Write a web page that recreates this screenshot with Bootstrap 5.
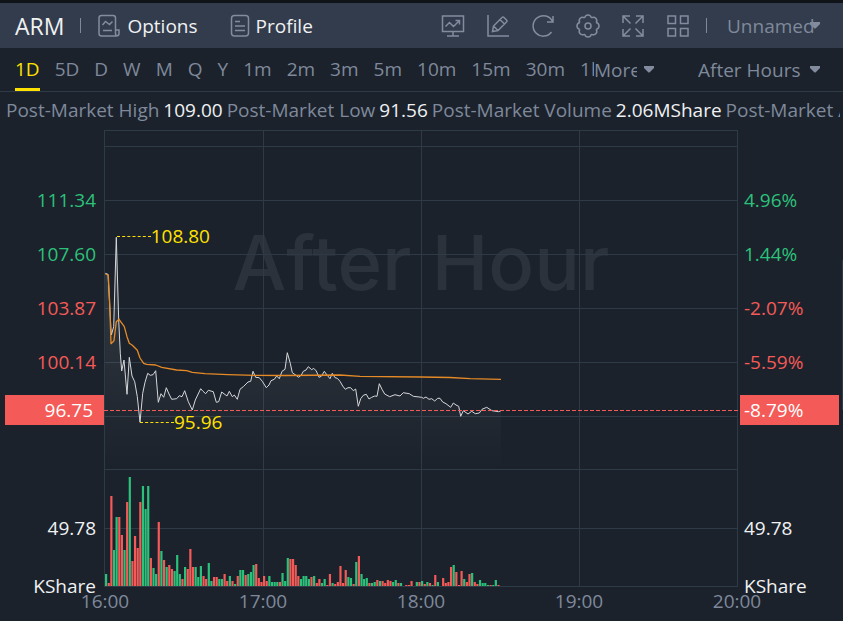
<!DOCTYPE html>
<html lang="en">
<head>
<meta charset="utf-8">
<meta name="viewport" content="width=device-width, initial-scale=1">
<title>ARM After Hours</title>
<link href="https://cdn.jsdelivr.net/npm/bootstrap@5.3.0/dist/css/bootstrap.min.css" rel="stylesheet">
<style>
:root{--bg:#1b222b;--bar:#323c4c;--line:#2f3a47;--muted:#7f899b;--up:#2cc17b;--down:#f45a57;--hot:#ffe100}
body{background:var(--bg);color:#f0f1f3;font-family:"Open Sans","Noto Sans",sans-serif;font-size:19px;line-height:30px;overflow-x:hidden}
.app{border-top:3px solid #101418}
.topbar{background:var(--bar);height:45px;padding:0 22px 0 15px}
.ticker{font-size:23px}
.divider{width:1px;height:15px;background:var(--muted)}
.view-link{color:#f0f1f3;gap:6px}
.view-link svg,.tool svg{fill:none;stroke:#828c9e;stroke-width:1.5;display:block}
.tools{gap:21px}
.tool{width:24px;height:24px;color:var(--muted)}
.picker{appearance:none;border:0;color:var(--muted);padding:0;height:30px;background:transparent url("data:image/svg+xml,%3Csvg xmlns='http://www.w3.org/2000/svg' width='12' height='7'%3E%3Cpath d='M1 0h10v2L6.500 6.500h-1L1 2z' fill='%23828c9e'/%3E%3C/svg%3E") no-repeat right center}
.pick-layout{width:94px;padding-right:6px}
.pick-more{width:61px;padding-right:18px;margin-right:43px}
.pick-session{width:123px;padding-right:18px}
.periods{height:44px;border-bottom:1px solid var(--line);padding:0 22px 0 15px}
.period-list{gap:15px;min-width:0;overflow:hidden;height:43px}
.period{color:var(--muted);border:0;background:none;padding:0;border-bottom:3px solid transparent;border-top:1px solid transparent;white-space:nowrap;flex:none}
.period.active{color:var(--hot);border-bottom-color:var(--hot)}
.stats{height:38px;padding:3px 0 0 6px;margin-right:3px;color:var(--muted);gap:4px}
.stats b{font-weight:400;color:#f0f1f3}
.axis-l{width:104px;padding-top:43px}
.axis-r{width:105px;padding-top:43px}
.axis-l .tick{padding-right:8px;text-align:right}
.axis-r .tick{padding-left:6px}
.tick{height:54px;line-height:54px}
.tag{background:var(--down);color:#fff;margin:6px 0 76px;height:30px}
.axis-l .tag{margin-left:5px;padding-right:11px;text-align:right}
.axis-r .tag{margin-left:2px;margin-right:4px;padding-left:4px}
.tick.unit{height:16px;line-height:30px;margin-top:16px}
.up{color:var(--up)}.down{color:var(--down)}
.plot{min-width:0}
.plot svg{display:block;width:100%;height:457px;position:relative}
.plot svg *{vector-effect:non-scaling-stroke}
.watermark{left:0;right:0;top:86px;text-align:center;font:500 76px/92px Inter,Roboto,sans-serif;color:#2b323c;white-space:nowrap}
.callout{color:var(--hot)}
.callout::before{content:"";width:34px;border-top:1px dashed var(--hot)}
.peak{left:2%;top:91px}
.trough{left:36px;top:277px}
.hours{color:var(--muted);margin:0 79px 0 78px;line-height:29px}
.hours span{width:54px;text-align:center;white-space:nowrap}
.edge{right:0;top:257px;width:1px;height:150px;background:var(--line)}
</style>
</head>
<body>
<main class="app position-relative">
  <header class="topbar d-flex align-items-center">
    <span class="ticker">ARM</span>
    <span class="divider mx-3"></span>
    <a href="#options" class="view-link d-flex align-items-center text-decoration-none">
      <svg width="24" height="24" viewBox="0 0 24 24"><path d="M18.500 16V4q0-2.500-2.500-2.500H4.500Q2 1.500 2 4v15.500Q2 22 4.500 22H19q3 0 3-2.500V16h-3.500v3.500q0 2.500 2 2.500M5.500 11l3-3.500 4 3 3-3M6 16.500h9"/></svg>
      Options</a>
    <a href="#profile" class="view-link d-flex align-items-center text-decoration-none ms-4 ps-2">
      <svg width="20" height="24" viewBox="0 0 20 24"><rect x="1.500" y="1.500" width="17" height="20.500" rx="3"/><path d="M5 7.500h5M5 12h10M5 16.500h10"/></svg>
      Profile</a>
    <div class="tools d-flex align-items-center ms-auto">
      <button class="tool btn p-0 border-0" aria-label="Chart board"><svg width="24" height="24" viewBox="0 0 24 24"><path d="M1.500 2h21v15.500h-21zM12 17.500v4M6 22h12M4.500 12.500l4-4 4 4 6-6M14.500 6.500h4v4"/></svg></button>
      <button class="tool btn p-0 border-0" aria-label="Draw"><svg width="24" height="24" viewBox="0 0 24 24"><path d="M2 1v21h21M6.500 17.500l1-5.500L16 3.500q1-1 2 0L20.500 6q1 1 0 2L12 16.500zM14 5.500l4.500 4.500M7.500 12l4.500 4.500"/></svg></button>
      <button class="tool btn p-0 border-0" aria-label="Refresh"><svg width="24" height="24" viewBox="0 0 24 24"><path d="M22 2v6h-6M21.500 7.500A10.200 10.200 0 1 0 20.500 18"/></svg></button>
      <button class="tool btn p-0 border-0" aria-label="Settings"><svg width="24" height="24" viewBox="0 0 24 24"><defs><path id="tooth" d="M8.600 3.900C9.500 0 14.500 0 15.400 3.900"/></defs><use href="#tooth"/><use href="#tooth" transform="rotate(45 12 12)"/><use href="#tooth" transform="rotate(90 12 12)"/><use href="#tooth" transform="rotate(135 12 12)"/><use href="#tooth" transform="rotate(180 12 12)"/><use href="#tooth" transform="rotate(225 12 12)"/><use href="#tooth" transform="rotate(270 12 12)"/><use href="#tooth" transform="rotate(315 12 12)"/><circle cx="12" cy="12" r="3"/></svg></button>
      <button class="tool btn p-0 border-0" aria-label="Full screen"><svg width="24" height="24" viewBox="0 0 24 24"><path d="M2 9V2h7M2 2l7.500 7.500M15 2h7v7M22 2l-7.500 7.500M2 15v7h7M2 22l7.500-7.500M22 15v7h-7M22 22l-7.500-7.500"/></svg></button>
      <button class="tool btn p-0 border-0" aria-label="Layout grid"><svg width="24" height="24" viewBox="0 0 24 24"><path d="M2 2h7.500v7.500H2zM14.500 2H22v7.500h-7.500zM2 14.500h7.500V22H2zM14.500 14.500H22V22h-7.500z"/></svg></button>
    </div>
    <span class="divider ms-3 me-3"></span>
    <select class="picker pick-layout ms-1" aria-label="Layout"><option>Unnamed</option></select>
  </header>

  <nav class="periods d-flex align-items-center" aria-label="Period">
    <div class="period-list d-flex flex-fill">
      <button class="period active">1D</button><button class="period">5D</button><button class="period">D</button><button class="period">W</button><button class="period">M</button><button class="period">Q</button><button class="period">Y</button><button class="period">1m</button><button class="period">2m</button><button class="period">3m</button><button class="period">5m</button><button class="period">10m</button><button class="period">15m</button><button class="period">30m</button><button class="period">1h</button>
    </div>
    <select class="picker pick-more flex-shrink-0" aria-label="More periods"><option>More</option></select>
    <select class="picker pick-session flex-shrink-0" aria-label="Session"><option>After Hours</option></select>
  </nav>

  <div class="stats d-flex text-nowrap overflow-hidden"><span>Post-Market High</span><b>109.00</b><span>Post-Market Low</span><b>91.56</b><span>Post-Market Volume</span><b>2.06MShare</b><span>Post-Market Amount</span></div>

  <section class="d-flex">
    <div class="axis-l flex-shrink-0">
      <div class="tick up">111.34</div><div class="tick up">107.60</div><div class="tick down">103.87</div><div class="tick down">100.14</div>
      <div class="tag">96.75</div>
      <div class="tick">49.78</div><div class="tick unit">KShare</div>
    </div>
    <div class="plot flex-fill position-relative">
      <div class="watermark position-absolute">After Hour</div>
      <svg viewBox="104 130 634 457" preserveAspectRatio="none" role="img" aria-label="Price and volume">
        <defs><linearGradient id="shade" x1="0" y1="237" x2="0" y2="469" gradientUnits="userSpaceOnUse"><stop offset="0" stop-color="#fff" stop-opacity=".12"/><stop offset="1" stop-color="#fff" stop-opacity="0"/></linearGradient></defs>
        <path stroke="#2f3a47" fill="none" d="M104 130.500H738M104 146.500H738M104 200.500H738M104 254.500H738M104 308.500H738M104 362.500H738M104 416.500H738M104 469.500H738M104 528.500H738M104 586.500H738M104.500 130V587M263.500 130V587M421.500 130V587M579.500 130V587M737.500 130V587"/>
        <path id="area" fill="url(#shade)"/>
        <g id="bars"></g>
        <path id="price" fill="none" stroke="#d5d7da" stroke-linejoin="round"/>
        <path id="average" fill="none" stroke="#e58a27" stroke-width="1.300" stroke-linejoin="round"/>
        <path d="M104 410.500H738" stroke="#f45a57" stroke-dasharray="4 2"/>
      </svg>
      <div class="callout peak position-absolute d-flex align-items-center">108.80</div>
      <div class="callout trough position-absolute d-flex align-items-center">95.96</div>
    </div>
    <div class="axis-r flex-shrink-0">
      <div class="tick up">4.96%</div><div class="tick up">1.44%</div><div class="tick down">-2.07%</div><div class="tick down">-5.59%</div>
      <div class="tag">-8.79%</div>
      <div class="tick">49.78</div><div class="tick unit">KShare</div>
    </div>
  </section>
  <div class="hours d-flex justify-content-between"><span>16:00</span><span>17:00</span><span>18:00</span><span>19:00</span><span>20:00</span></div>
  <div class="edge position-absolute"></div>
</main>
<script src="https://cdn.jsdelivr.net/npm/bootstrap@5.3.0/dist/js/bootstrap.bundle.min.js"></script>
<script>
const price = "105.3,273.3 108,274.3 111.3,335 113.7,326.7 116.3,237.3 118.7,320 120.3,353.3 121.7,371 124,360 127,394.3 129.3,357.3 132,376 134.7,381.7 137.3,396.7 140,422.3 142.7,393.3 145,382.3 147.7,373.3 150.3,375.3 153,374.7 155.7,370.7 158.3,402.3 161,393.7 163.7,397.3 166.3,387.7 169,394 171.7,399.3 176.7,398.7 179.3,395.7 182,396.7 184.7,390.7 188.3,401.7 192.3,410 195.3,400 200.7,388.7 203,391.3 205.7,393.7 208.3,390.3 213.3,391.7 216.3,402.3 218.7,401.7 221.7,392 227,396 229.3,391.3 232.3,396.7 234.3,395 237.3,399.3 240,389.3 243.7,386.3 248,382 250.7,381.3 253,371.3 255.7,377.3 259.3,377.7 262.3,381.3 266.3,387.7 269,385 271,380.7 274.3,379.3 276.7,376 279.3,378.7 282,371.3 285,369.3 287.3,352.7 290.3,363.3 292.3,372.7 296,375.3 298.7,377.3 301.3,375 303.3,371.3 306,370 308.3,366.7 311.7,369.7 313.7,368.3 316.3,371 319,377.3 321.3,376.3 324.3,371.3 327,375 330,378.7 332.3,373.3 335,377.7 337.3,378.3 340,381.3 342.7,386 345.3,389.3 348,387.7 350.7,387.7 353.3,390.7 355.7,389 358.3,406.3 360.7,398.7 363.3,395.3 366.3,394.3 369,399 371.7,397.3 374.7,396 377,396.3 379.3,383.7 382,389.3 384.7,394 389.7,396.7 395,394.7 400,396 403.3,392.7 409.3,393.7 413.3,396.3 421.7,397.3 423.3,398.3 426,397 429,399.3 431.7,398.7 434.7,401 437.7,398.3 440,398.3 442.7,402 446,403.7 450.7,407.3 453.3,403 456,405 458.7,406.3 460.7,416.3 463.3,410.7 468,414 471.7,411.3 475.3,413.7 479.3,413 482,409.3 486.7,407.3 492,410.7 498.7,411.7 501,410.7";
const average = "105.3,274 108.3,275 109.7,303 111,343.7 114,340.7 116.3,321.7 119,319.3 124.3,326.7 127,336.7 129.3,343.3 132.3,345.3 137.3,350.3 140,358 143.7,363.3 146.7,364.3 155.7,365 161.7,367.3 176.7,370 186.7,370.7 192.3,372.3 205,373.7 228,374.7 255,375.3 285,375.5 340,375 360,376.3 421,377 450,377.5 470,378.7 501,379.3";
document.getElementById("price").setAttribute("d", "M" + price);
document.getElementById("area").setAttribute("d", "M105,469 " + price + " 501,469z");
document.getElementById("average").setAttribute("d", "M" + average);
// One bar per minute: g = rising, r = falling, then the height.
const volume = "g12 r3 r90 g36 g69 r69 r51 g36 r84 g109 r25 r50 r38 r84 g100 g77 g100 r28 g18 g12 r64 g35 r26 g19 r21 r17 g15 g31 g12 r7 g19 r17 r37 r19 g19 g9 g20 r10 r7 g23 g5 r9 r9 g7 g7 r12 r5 g10 r5 g2 r10 g16 g16 r11 g12 g14 g21 r22 r8 r4 r10 r5 g10 g4 g4 g4 r4 g13 g5 g28 r27 r27 r21 r10 g7 g10 g10 g7 r9 g10 r3 r7 g3 g7 r1 r12 g3 r2 r4 r20 r3 r16 g9 g8 r2 g24 r30 g12 g7 g8 r3 g3 g4 r6 g5 r5 r3 r6 r5 g4 g6 r3 g3 g0 r1 r1 r5 r0 g4 r4 g5 r2 g4 r3 g1 r11 g4 g0 r8 r3 r4 r19 g21 r14 r1 r15 g7 r4 r12 g13 r4 r2 g6 g3 g3 g1 r1 g1 g6 r1".split(" ");
document.getElementById("bars").innerHTML = volume.map((v, i) =>
  `<rect x="${(105 + i * 158 / 60).toFixed(2)}" y="${586 - v.slice(1)}" width="2.2" height="${v.slice(1)}" fill="${v[0] === "g" ? "#2cc17b" : "#f45a57"}"/>`).join("");
</script>
</body>
</html>
